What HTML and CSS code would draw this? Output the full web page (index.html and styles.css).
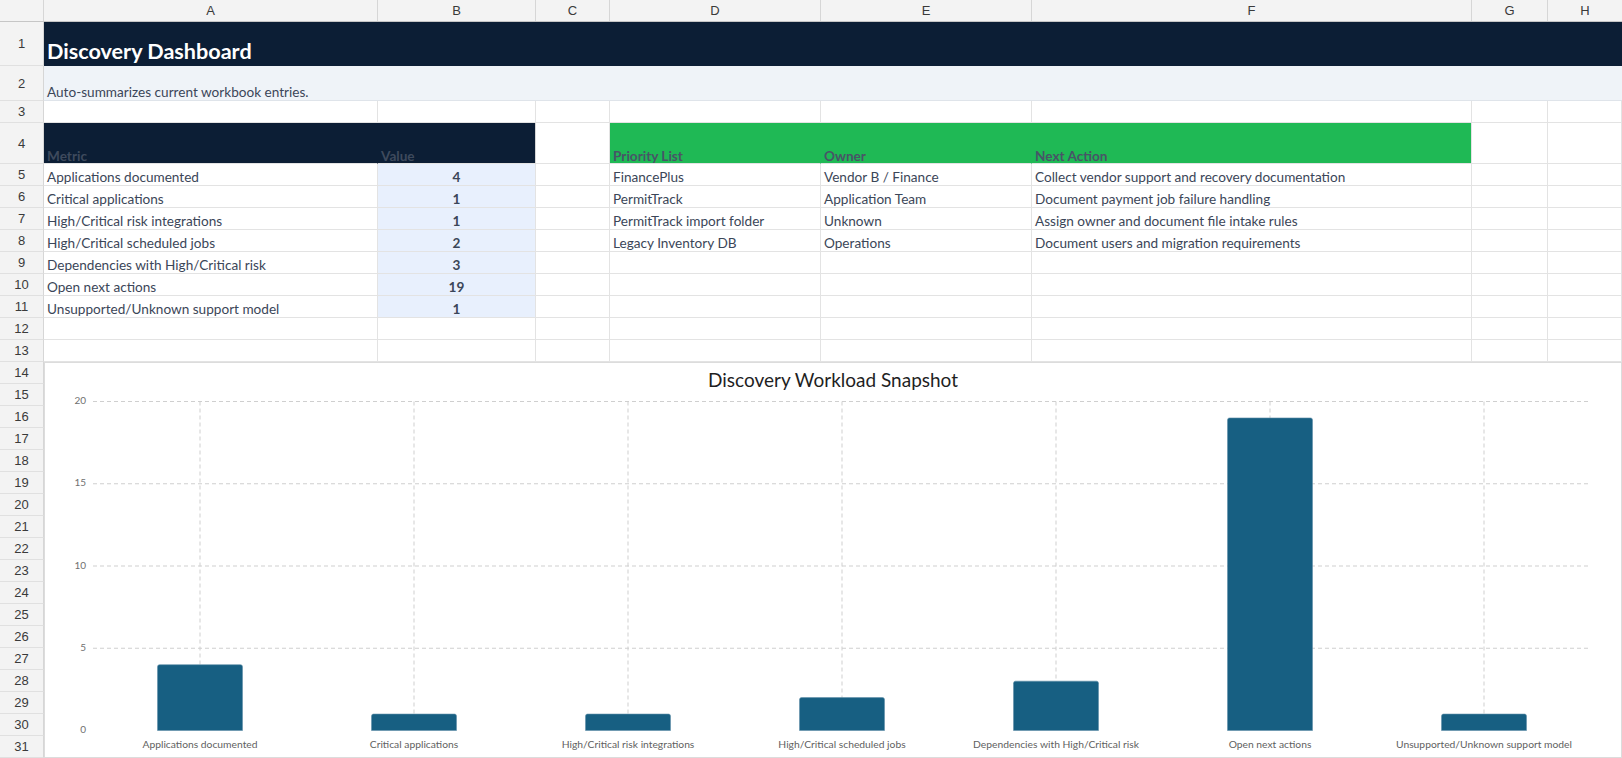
FILE: index.html
```html
<!DOCTYPE html>
<html lang="en">
<head>
<meta charset="utf-8">
<title>Discovery Dashboard</title>
<link rel="stylesheet" href="styles.css">
</head>
<body>
<div class="colhead">
  <div class="corner"></div>
  <div class="ch ca">A</div>
  <div class="ch cb">B</div>
  <div class="ch cc">C</div>
  <div class="ch cd">D</div>
  <div class="ch ce">E</div>
  <div class="ch cf">F</div>
  <div class="ch cg">G</div>
  <div class="ch chh">H</div>
</div>
<div class="sheet">
  <div class="rownums">
    <div class="rn tall1">1</div>
    <div class="rn tall2">2</div>
    <div class="rn">3</div>
    <div class="rn tall4">4</div>
    <div class="rn">5</div>
    <div class="rn">6</div>
    <div class="rn">7</div>
    <div class="rn">8</div>
    <div class="rn">9</div>
    <div class="rn">10</div>
    <div class="rn">11</div>
    <div class="rn">12</div>
    <div class="rn">13</div>
    <div class="rn">14</div>
    <div class="rn">15</div>
    <div class="rn">16</div>
    <div class="rn">17</div>
    <div class="rn">18</div>
    <div class="rn">19</div>
    <div class="rn">20</div>
    <div class="rn">21</div>
    <div class="rn">22</div>
    <div class="rn">23</div>
    <div class="rn">24</div>
    <div class="rn">25</div>
    <div class="rn">26</div>
    <div class="rn">27</div>
    <div class="rn">28</div>
    <div class="rn">29</div>
    <div class="rn">30</div>
    <div class="rn">31</div>
  </div>
  <div class="main">
    <div class="cells">
      <div class="c title span-all">Discovery Dashboard</div>
      <div class="c subtitle span-all">Auto-summarizes current workbook entries.</div>

      <div class="c"></div><div class="c"></div><div class="c"></div><div class="c"></div><div class="c"></div><div class="c"></div><div class="c"></div><div class="c"></div>

      <div class="c navy">Metric</div>
      <div class="c navy">Value</div>
      <div class="c"></div>
      <div class="c green">Priority List</div>
      <div class="c green">Owner</div>
      <div class="c green green-last">Next Action</div>
      <div class="c"></div><div class="c"></div>

      <div class="c">Applications documented</div><div class="c val">4</div><div class="c"></div>
      <div class="c">FinancePlus</div><div class="c">Vendor B / Finance</div><div class="c">Collect vendor support and recovery documentation</div><div class="c"></div><div class="c"></div>

      <div class="c">Critical applications</div><div class="c val">1</div><div class="c"></div>
      <div class="c">PermitTrack</div><div class="c">Application Team</div><div class="c">Document payment job failure handling</div><div class="c"></div><div class="c"></div>

      <div class="c">High/Critical risk integrations</div><div class="c val">1</div><div class="c"></div>
      <div class="c">PermitTrack import folder</div><div class="c">Unknown</div><div class="c">Assign owner and document file intake rules</div><div class="c"></div><div class="c"></div>

      <div class="c">High/Critical scheduled jobs</div><div class="c val">2</div><div class="c"></div>
      <div class="c">Legacy Inventory DB</div><div class="c">Operations</div><div class="c">Document users and migration requirements</div><div class="c"></div><div class="c"></div>

      <div class="c">Dependencies with High/Critical risk</div><div class="c val">3</div><div class="c"></div>
      <div class="c"></div><div class="c"></div><div class="c"></div><div class="c"></div><div class="c"></div>

      <div class="c">Open next actions</div><div class="c val">19</div><div class="c"></div>
      <div class="c"></div><div class="c"></div><div class="c"></div><div class="c"></div><div class="c"></div>

      <div class="c">Unsupported/Unknown support model</div><div class="c val">1</div><div class="c"></div>
      <div class="c"></div><div class="c"></div><div class="c"></div><div class="c"></div><div class="c"></div>

      <div class="c"></div><div class="c"></div><div class="c"></div><div class="c"></div><div class="c"></div><div class="c"></div><div class="c"></div><div class="c"></div>
      <div class="c"></div><div class="c"></div><div class="c"></div><div class="c"></div><div class="c"></div><div class="c"></div><div class="c"></div><div class="c"></div>
    </div>
    <div class="chart">
      <svg class="chart-svg" viewBox="0 0 1576 394" width="1576" height="394">
        <text class="chart-title" x="788" y="24" text-anchor="middle">Discovery Workload Snapshot</text>
        <g class="grid">
          <line x1="48" y1="38.5" x2="1546" y2="38.5"/>
          <line x1="48" y1="120.75" x2="1546" y2="120.75"/>
          <line x1="48" y1="203" x2="1546" y2="203"/>
          <line x1="48" y1="285.25" x2="1546" y2="285.25"/>
          <line x1="155" y1="38.5" x2="155" y2="367.5"/>
          <line x1="369" y1="38.5" x2="369" y2="367.5"/>
          <line x1="583" y1="38.5" x2="583" y2="367.5"/>
          <line x1="797" y1="38.5" x2="797" y2="367.5"/>
          <line x1="1011" y1="38.5" x2="1011" y2="367.5"/>
          <line x1="1225" y1="38.5" x2="1225" y2="367.5"/>
          <line x1="1439" y1="38.5" x2="1439" y2="367.5"/>
        </g>
        <g class="ylabels">
          <text x="41" y="38.5">20</text>
          <text x="41" y="120.75">15</text>
          <text x="41" y="203">10</text>
          <text x="41" y="285.25">5</text>
          <text x="41" y="367.5">0</text>
        </g>
        <g class="bars">
          <path d="M112.5 367.5 V303.7 Q112.5 301.7 114.5 301.7 H195.5 Q197.5 301.7 197.5 303.7 V367.5 Z"/>
          <path d="M326.5 367.5 V353.05 Q326.5 351.05 328.5 351.05 H409.5 Q411.5 351.05 411.5 353.05 V367.5 Z"/>
          <path d="M540.5 367.5 V353.05 Q540.5 351.05 542.5 351.05 H623.5 Q625.5 351.05 625.5 353.05 V367.5 Z"/>
          <path d="M754.5 367.5 V336.6 Q754.5 334.6 756.5 334.6 H837.5 Q839.5 334.6 839.5 336.6 V367.5 Z"/>
          <path d="M968.5 367.5 V320.15 Q968.5 318.15 970.5 318.15 H1051.5 Q1053.5 318.15 1053.5 320.15 V367.5 Z"/>
          <path d="M1182.5 367.5 V56.95 Q1182.5 54.95 1184.5 54.95 H1265.5 Q1267.5 54.95 1267.5 56.95 V367.5 Z"/>
          <path d="M1396.5 367.5 V353.05 Q1396.5 351.05 1398.5 351.05 H1479.5 Q1481.5 351.05 1481.5 353.05 V367.5 Z"/>
        </g>
        <g class="xlabels">
          <text x="155" y="382">Applications documented</text>
          <text x="369" y="382">Critical applications</text>
          <text x="583" y="382">High/Critical risk integrations</text>
          <text x="797" y="382">High/Critical scheduled jobs</text>
          <text x="1011" y="382">Dependencies with High/Critical risk</text>
          <text x="1225" y="382">Open next actions</text>
          <text x="1439" y="382">Unsupported/Unknown support model</text>
        </g>
      </svg>
    </div>
  </div>
</div>
</body>
</html>
```

FILE: styles.css
```css
* { box-sizing: border-box; }
html, body {
  margin: 0;
  padding: 0;
  background: #ffffff;
  overflow: hidden;
}
body {
  width: 1622px;
  height: 758px;
  font-family: Lato, "Open Sans", sans-serif;
}

/* column header strip */
.colhead {
  display: flex;
  height: 22px;
  background: #f3f3f3;
  border-bottom: 1px solid #c6c6c6;
}
.corner {
  width: 44px;
  flex: none;
  border-right: 1px solid #d6d6d6;
}
.ch {
  flex: none;
  display: flex;
  align-items: center;
  justify-content: center;
  font-family: "Liberation Sans", Arial, sans-serif;
  font-size: 13px;
  color: #3a3a3a;
  border-right: 1px solid #d6d6d6;
}
.ca { width: 334px; }
.cb { width: 158px; }
.cc { width: 74px; }
.cd { width: 211px; }
.ce { width: 211px; }
.cf { width: 440px; }
.cg { width: 76px; }
.chh { width: 74px; border-right: none; }

.sheet {
  display: flex;
}

/* row numbers */
.rownums {
  width: 44px;
  flex: none;
  display: flex;
  flex-direction: column;
  background: #f3f3f3;
}
.rn {
  height: 22px;
  flex: none;
  display: flex;
  align-items: center;
  justify-content: center;
  font-family: "Liberation Sans", Arial, sans-serif;
  font-size: 13px;
  color: #3a3a3a;
  border-right: 1px solid #d6d6d6;
  border-bottom: 1px solid #e0e0e0;
}
.rn.tall1 { height: 44px; }
.rn.tall2 { height: 35px; }
.rn.tall4 { height: 41px; }

.main {
  flex: none;
  width: 1578px;
  display: flex;
  flex-direction: column;
}

/* cell grid */
.cells {
  display: grid;
  grid-template-columns: 334px 158px 74px 211px 211px 440px 76px 74px;
  grid-template-rows: 44px 35px 22px 41px repeat(9, 22px);
}
.c {
  display: flex;
  align-items: flex-end;
  padding: 0 3px 0 3px;
  font-size: 13.6px;
  line-height: 15px;
  color: #3b4658;
  white-space: nowrap;
  overflow: hidden;
  border-right: 1px solid #e3e3e3;
  border-bottom: 1px solid #e3e3e3;
}
.span-all {
  grid-column: 1 / -1;
}
.c.title {
  background: #0c1e35;
  color: #ffffff;
  font-size: 21.6px;
  font-weight: 700;
  line-height: 26px;
  padding-bottom: 2px;
  border-right: none;
  border-bottom: none;
}
.c.subtitle {
  background: #eff3f8;
  color: #3b4658;
  border-right: none;
  border-bottom: 1px solid #dfe4ea;
}
.c.navy {
  background: #0c1e35;
  border-right-color: #0c1e35;
  color: #3e4a5d;
  font-weight: 700;
  line-height: 13px;
}
.c.navy + .c.navy {
  border-right-color: #d6d6d6;
}
.c.green {
  background: #1fb955;
  border-right-color: #1fb955;
  color: #485467;
  font-weight: 700;
  line-height: 13px;
}
.c.green-last {
  border-right-color: #e3e3e3;
}
.c.val {
  background: #e8f0fd;
  justify-content: center;
  font-weight: 700;
}

/* chart */
.chart {
  width: 1578px;
  height: 396px;
  border: 1px solid #dcdcdc;
  background: #ffffff;
}
.chart-svg {
  display: block;
}
.chart-title {
  font-family: Lato, sans-serif;
  font-size: 19px;
  fill: #1f1f1f;
}
.grid line {
  stroke: #cfcfcf;
  stroke-width: 1;
  stroke-dasharray: 4 3;
}
.ylabels text {
  font-family: Lato, sans-serif;
  font-size: 10px;
  fill: #707070;
  text-anchor: end;
  dominant-baseline: middle;
}
.xlabels text {
  font-family: Lato, sans-serif;
  font-size: 10.3px;
  fill: #5f5f5f;
  text-anchor: middle;
  dominant-baseline: middle;
}
.bars path {
  fill: #175f82;
  stroke: #5f8fa8;
  stroke-width: 0.6;
}
```
